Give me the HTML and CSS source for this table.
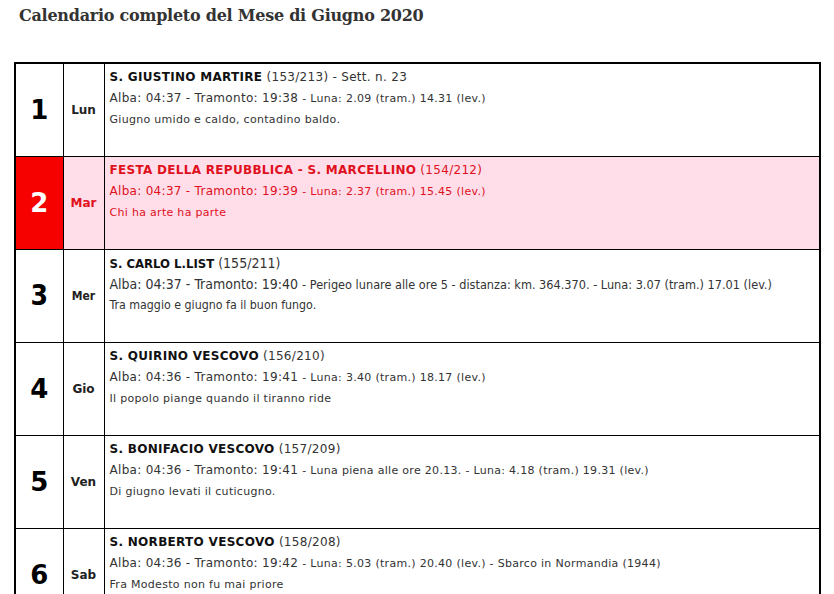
FILE: index.html
```html
<!DOCTYPE html>
<html lang="it">
<head>
<meta charset="utf-8">
<title>Calendario Giugno 2020</title>
<link rel="stylesheet" href="styles.css">
</head>
<body>
<h1 class="title">Calendario completo del Mese di Giugno 2020</h1>
<table class="cal">
  <colgroup><col class="c-num"><col class="c-day"><col class="c-info"></colgroup>
  <tr>
    <td class="num">1</td><td class="day">Lun</td>
    <td class="info"><div class="l1"><b>S. GIUSTINO MARTIRE</b> (153/213) - Sett. n. 23</div>
      <div class="l2">Alba: 04:37 - Tramonto: 19:38 <small>- Luna: 2.09 (tram.) 14.31 (lev.)</small></div>
      <div class="l3">Giugno umido e caldo, contadino baldo.</div></td>
  </tr>
  <tr class="holiday">
    <td class="num">2</td><td class="day">Mar</td>
    <td class="info"><div class="l1"><b>FESTA DELLA REPUBBLICA - S. MARCELLINO</b> (154/212)</div>
      <div class="l2">Alba: 04:37 - Tramonto: 19:39 <small>- Luna: 2.37 (tram.) 15.45 (lev.)</small></div>
      <div class="l3">Chi ha arte ha parte</div></td>
  </tr>
  <tr class="narrow">
    <td class="num">3</td><td class="day">Mer</td>
    <td class="info"><div class="l1"><b>S. CARLO L.LIST</b> (155/211)</div>
      <div class="l2">Alba: 04:37 - Tramonto: 19:40 <small>- Perigeo lunare alle ore 5 - distanza: km. 364.370. - Luna: 3.07 (tram.) 17.01 (lev.)</small></div>
      <div class="l3">Tra maggio e giugno fa il buon fungo.</div></td>
  </tr>
  <tr>
    <td class="num">4</td><td class="day">Gio</td>
    <td class="info"><div class="l1"><b>S. QUIRINO VESCOVO</b> (156/210)</div>
      <div class="l2">Alba: 04:36 - Tramonto: 19:41 <small>- Luna: 3.40 (tram.) 18.17 (lev.)</small></div>
      <div class="l3">Il popolo piange quando il tiranno ride</div></td>
  </tr>
  <tr>
    <td class="num">5</td><td class="day">Ven</td>
    <td class="info"><div class="l1"><b>S. BONIFACIO VESCOVO</b> (157/209)</div>
      <div class="l2">Alba: 04:36 - Tramonto: 19:41 <small>- Luna piena alle ore 20.13. - Luna: 4.18 (tram.) 19.31 (lev.)</small></div>
      <div class="l3">Di giugno levati il cuticugno.</div></td>
  </tr>
  <tr>
    <td class="num">6</td><td class="day">Sab</td>
    <td class="info"><div class="l1"><b>S. NORBERTO VESCOVO</b> (158/208)</div>
      <div class="l2">Alba: 04:36 - Tramonto: 19:42 <small>- Luna: 5.03 (tram.) 20.40 (lev.) - Sbarco in Normandia (1944)</small></div>
      <div class="l3">Fra Modesto non fu mai priore</div></td>
  </tr>
  <tr class="holiday">
    <td class="num">7</td><td class="day">Dom</td>
    <td class="info"><div class="l1"><b>S. ROBERTO ABATE</b> (159/207)</div>
      <div class="l2">Alba: 04:36 - Tramonto: 19:43 <small>- Luna: 5.51 (tram.) 21.44 (lev.)</small></div>
      <div class="l3">Chi va piano va sano e va lontano</div></td>
  </tr>
</table>
</body>
</html>
```

FILE: styles.css
```css
html, body {
  margin: 0;
  padding: 0;
  background: #fff;
}
body {
  font-family: "DejaVu Sans", Verdana, sans-serif;
  color: #333;
}
.title {
  margin: 0;
  padding: 6px 0 0 19px;
  height: 62px;
  box-sizing: border-box;
  font-family: "DejaVu Serif", "Liberation Serif", serif;
  font-size: 16px;
  font-weight: bold;
  color: #333;
  letter-spacing: -0.25px;
}
.cal {
  margin-left: 14px;
  width: 807px;
  border-collapse: collapse;
  border: 2px solid #000;
  table-layout: fixed;
}
.c-num { width: 48px; }
.c-day { width: 41px; }
.cal td {
  border: 1px solid #000;
  height: 93px;
  box-sizing: border-box;
  padding: 0;
}
.num {
  text-align: center;
  vertical-align: middle;
  font-size: 26px;
  font-weight: bold;
  color: #000;
}
.day {
  text-align: center;
  vertical-align: middle;
  font-size: 12px;
  font-weight: bold;
  color: #222;
}
.info {
  vertical-align: top;
  padding: 3px 0 0 5px !important;
  font-size: 12px;
  color: #333;
  letter-spacing: 0.3px;
}
.info b { color: #111; }
.l1, .l2 { line-height: 21px; height: 21px; white-space: nowrap; }
.l3 { line-height: 21px; font-size: 11px; }
.info small { font-size: 11px; }
.holiday td { background: #ffdeea; color: #e0101c; }
.holiday .num { background: #f60000; color: #fff; }
.holiday .day, .holiday b { color: #e0101c; }
.narrow td { font-family: "DejaVu Sans Condensed", "DejaVu Sans", sans-serif; font-stretch: condensed; letter-spacing: 0; }
.narrow .num { font-size: 28px; }
.narrow .info { font-size: 14px; }
.narrow .info b { font-size: 13px; }
.narrow .info small { font-size: 12.6px; }
.narrow .l3 { font-size: 12.3px; }
```
